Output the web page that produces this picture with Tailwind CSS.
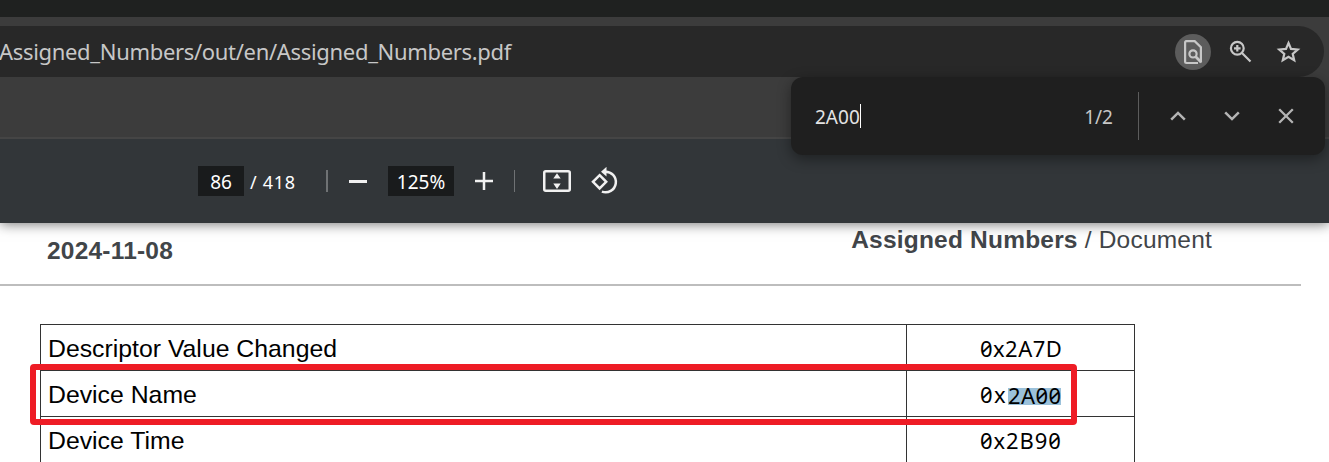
<!DOCTYPE html>
<html lang="en">
<head>
<meta charset="utf-8">
<title>Assigned_Numbers.pdf</title>
<script src="https://cdn.jsdelivr.net/npm/@tailwindcss/browser@4"></script>
</head>
<body class="relative flex h-[462px] w-[1329px] flex-col overflow-hidden bg-white font-['Noto_Sans',sans-serif]">
  <div class="h-[17px] shrink-0 bg-[#1f2120]"></div>

  <!-- Address bar -->
  <header class="relative z-20 flex h-[122px] shrink-0 flex-col border-b-2 border-[#454545] bg-[#3c3c3c] pt-[9px]">
    <div class="flex h-[51px] w-[1324px] items-center justify-between rounded-r-full bg-[#282828] pr-[19px]">
      <span class="-ml-px text-[22px] leading-[51px] tracking-[-0.320px] whitespace-nowrap text-[#c7c7c7]">Assigned_Numbers/out/en/Assigned_Numbers.pdf</span>
      <div class="flex items-center">
        <div class="flex size-9 items-center justify-center rounded-full bg-[#5c5c5c]">
          <svg class="size-7" viewBox="0 0 28 28" fill="none" stroke="#c7c7c7" stroke-width="2.2"><path d="M6.500 3.100h9.200l6.200 6.200v15.200M19 25H7.500a1.400 1.400 0 0 1-1.400-1.400V4.500A1.400 1.400 0 0 1 7.500 3.100"/><circle cx="14" cy="15.900" r="3.600"/><path d="M16.500 18.500l5.700 5.700" stroke-width="2.800"/></svg>
        </div>
        <svg class="ml-[14px] size-8" viewBox="0 0 32 32" fill="none" stroke="#c7c7c7" stroke-width="2.200"><circle cx="12.300" cy="12.300" r="6.400"/><path d="M17 17l8.500 8.500M12.300 9v6.600M9 12.300h6.600"/></svg>
        <svg class="ml-4 size-8" viewBox="0 0 32 32" fill="none" stroke="#c7c7c7" stroke-width="2.200"><path d="M15.500 7l2.500 5.900 6.700.6-5 4.300 1.500 6.500L15.500 20.900l-5.700 3.400 1.500-6.500-5-4.300 6.700-.6z"/></svg>
      </div>
    </div>
  </header>

  <!-- PDF viewer toolbar -->
  <nav class="relative z-10 flex h-[84px] shrink-0 items-center bg-[#323639] pl-[198px] text-white shadow-[0_1px_12px_rgba(0,0,0,0.55)]">
    <div class="flex h-[30px] w-[46px] items-center justify-center bg-[#191b1c] pt-0.5 text-[19px]">86</div>
    <div class="ml-1.5 w-[60px] pt-[3px] text-[18px] tracking-[0.700px] whitespace-nowrap">/ 418</div>
    <div class="ml-4 h-[22px] w-0.5 bg-[#6f7274]"></div>
    <div class="ml-[21px] h-[3px] w-[18px] bg-[#f1f1f1]"></div>
    <div class="ml-[21px] flex h-[30px] w-[66px] items-center justify-center bg-[#191b1c] pt-0.5 text-[19px]">125%</div>
    <svg class="ml-[21px] size-[18px]" viewBox="0 0 18 18" stroke="#f1f1f1" stroke-width="2.500"><path d="M0 9h18M9 0v18"/></svg>
    <div class="ml-[21px] h-[22px] w-px bg-[#6f7274]"></div>
    <svg class="ml-7 h-[22px] w-7" viewBox="0 0 28 22"><rect x="1.250" y="1.250" width="25.500" height="19.500" rx="1.500" fill="none" stroke="#f1f1f1" stroke-width="2.500"/><path d="M14 3.200l3.700 5.300h-7.400zM14 18.900l3.700-5.300h-7.400z" fill="#f1f1f1"/></svg>
    <svg class="ml-5 -mt-px h-7 w-7" viewBox="0 0 28 28" fill="none" stroke="#f1f1f1" stroke-width="2.500"><path d="M8.600 8.200l6.600 6.600-6.600 6.600L2 14.800z"/><path d="M13.800 4.700a10.300 10.300 0 1 1-2.900 19.900"/><path d="M15.500-.2v9.800L10 4.700z" fill="#f1f1f1" stroke="none"/></svg>
  </nav>

  <!-- Document page -->
  <main class="relative flex grow flex-col font-['Liberation_Sans',sans-serif]">
    <div class="flex h-[63px] w-[1301px] shrink-0 items-start justify-between border-b-2 border-[#bdbdbd] pr-[89px] pl-[47px] text-[24.500px] leading-7 tracking-[0.200px] text-[#414549]">
      <span class="mt-[14px] font-bold">2024-11-08</span>
      <span class="mt-[3px]"><b>Assigned Numbers</b> / Document</span>
    </div>
    <div class="mt-[38px] ml-10 grid w-[1095px] shrink-0 grid-cols-[866px_228px] border-t border-l border-[#333] text-[24.800px] leading-[45px] text-black *:h-[46px] *:border-r *:border-b *:border-[#333]">
      <div class="pt-px pl-[7px]">Descriptor Value Changed</div>
      <div class="flex items-center pt-0.5 pl-[73px] font-['Noto_Sans',monospace] text-[22px] tracking-[0.450px] [font-feature-settings:'zero','tnum']">0x2A7D</div>
      <div class="pt-px pl-[7px]">Device Name</div>
      <div class="flex items-center pt-0.5 pl-[73px] font-['Noto_Sans',monospace] text-[22px] tracking-[0.450px] [font-feature-settings:'zero','tnum']"><span class="w-7 tracking-[1.500px]">0x</span><span class="mt-[3px] h-[17px] w-[53px] bg-[#9bc1da] leading-[14px]">2A00</span></div>
      <div class="pt-px pl-[7px]">Device Time</div>
      <div class="flex items-center pt-0.5 pl-[73px] font-['Noto_Sans',monospace] text-[22px] tracking-[0.900px] [font-feature-settings:'zero','tnum']">0x2B90</div>
    </div>
    <div class="absolute top-[141px] left-[30px] h-[61px] w-[1047px] rounded-sm border-6 border-[#ee1c25]"></div>
  </main>

  <!-- Find bar -->
  <div class="absolute top-[77px] left-[791px] z-20 flex h-[78px] w-[534px] items-center rounded-xl bg-[#1f1f1f] pl-6 text-[19px] shadow-[0_4px_14px_rgba(0,0,0,0.4)]">
    <span class="pt-0.5 text-[#e3e3e3]">2A00</span>
    <div class="h-6 w-px bg-white"></div>
    <span class="ml-auto pt-0.5 text-[#c7c7c7]">1/2</span>
    <div class="ml-[25px] h-12 w-px bg-[#5c5c5c]"></div>
    <svg class="ml-[23px] size-8" viewBox="0 0 32 32" fill="none" stroke="#b4b4b4" stroke-width="2.500"><path d="M9.200 19.700l6.800-6.800 6.800 6.800"/></svg>
    <svg class="ml-[22px] size-8" viewBox="0 0 32 32" fill="none" stroke="#b4b4b4" stroke-width="2.500"><path d="M9.200 12.300l6.800 6.800 6.800-6.800"/></svg>
    <svg class="mr-[23px] ml-[22px] size-8" viewBox="0 0 32 32" fill="none" stroke="#b4b4b4" stroke-width="2.300"><path d="M9.200 9.200l13.600 13.600M22.800 9.200L9.200 22.800"/></svg>
  </div>
</body>
</html>
